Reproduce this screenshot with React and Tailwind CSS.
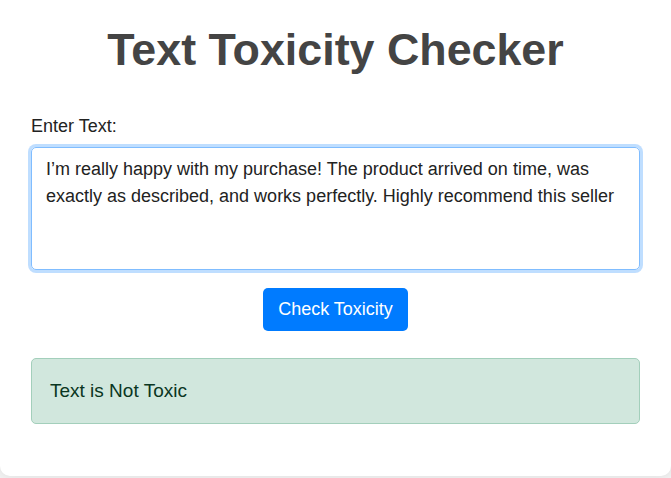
import { useState } from 'react'

export default function App() {
  const [text, setText] = useState(
    'I’m really happy with my purchase! The product arrived on time, was exactly as described, and works perfectly. Highly recommend this seller'
  )

  return (
    <div className="min-h-screen bg-[#f1f1f1] font-['Liberation_Sans',Arial,sans-serif]">
      <div className="flex h-[476px] flex-col rounded-b-[10px] bg-white px-[31px] pt-[24px] shadow-[0_0_8px_rgba(0,0,0,0.08)]">
        <h1 className="text-center text-[44.8px] font-bold leading-[1.15] text-[#444]">
          Text Toxicity Checker
        </h1>

        <label htmlFor="text" className="mt-[40px] text-[18px] leading-[1.15] text-[#222]">
          Enter Text:
        </label>
        <textarea
          id="text"
          value={text}
          onChange={(e) => setText(e.target.value)}
          className="mt-[11px] h-[123px] w-full resize-none rounded-[5px] border border-[#80bdff] px-[14px] pt-[8px] text-[18px] leading-[27px] text-[#222] shadow-[0_0_0_3px_rgba(0,123,255,0.25)] outline-none"
        />

        <div className="mt-[18px] flex justify-center">
          <button
            type="button"
            className="h-[43px] rounded-[5px] bg-[#007bff] px-[15px] text-[18px] text-white"
          >
            Check Toxicity
          </button>
        </div>

        <div className="mt-[27px] flex h-[66px] items-center rounded-[5px] border border-[#a3cfbb] bg-[#d1e7dd] px-[18px] text-[19px] text-[#0a3622]">
          Text is Not Toxic
        </div>
      </div>
    </div>
  )
}
